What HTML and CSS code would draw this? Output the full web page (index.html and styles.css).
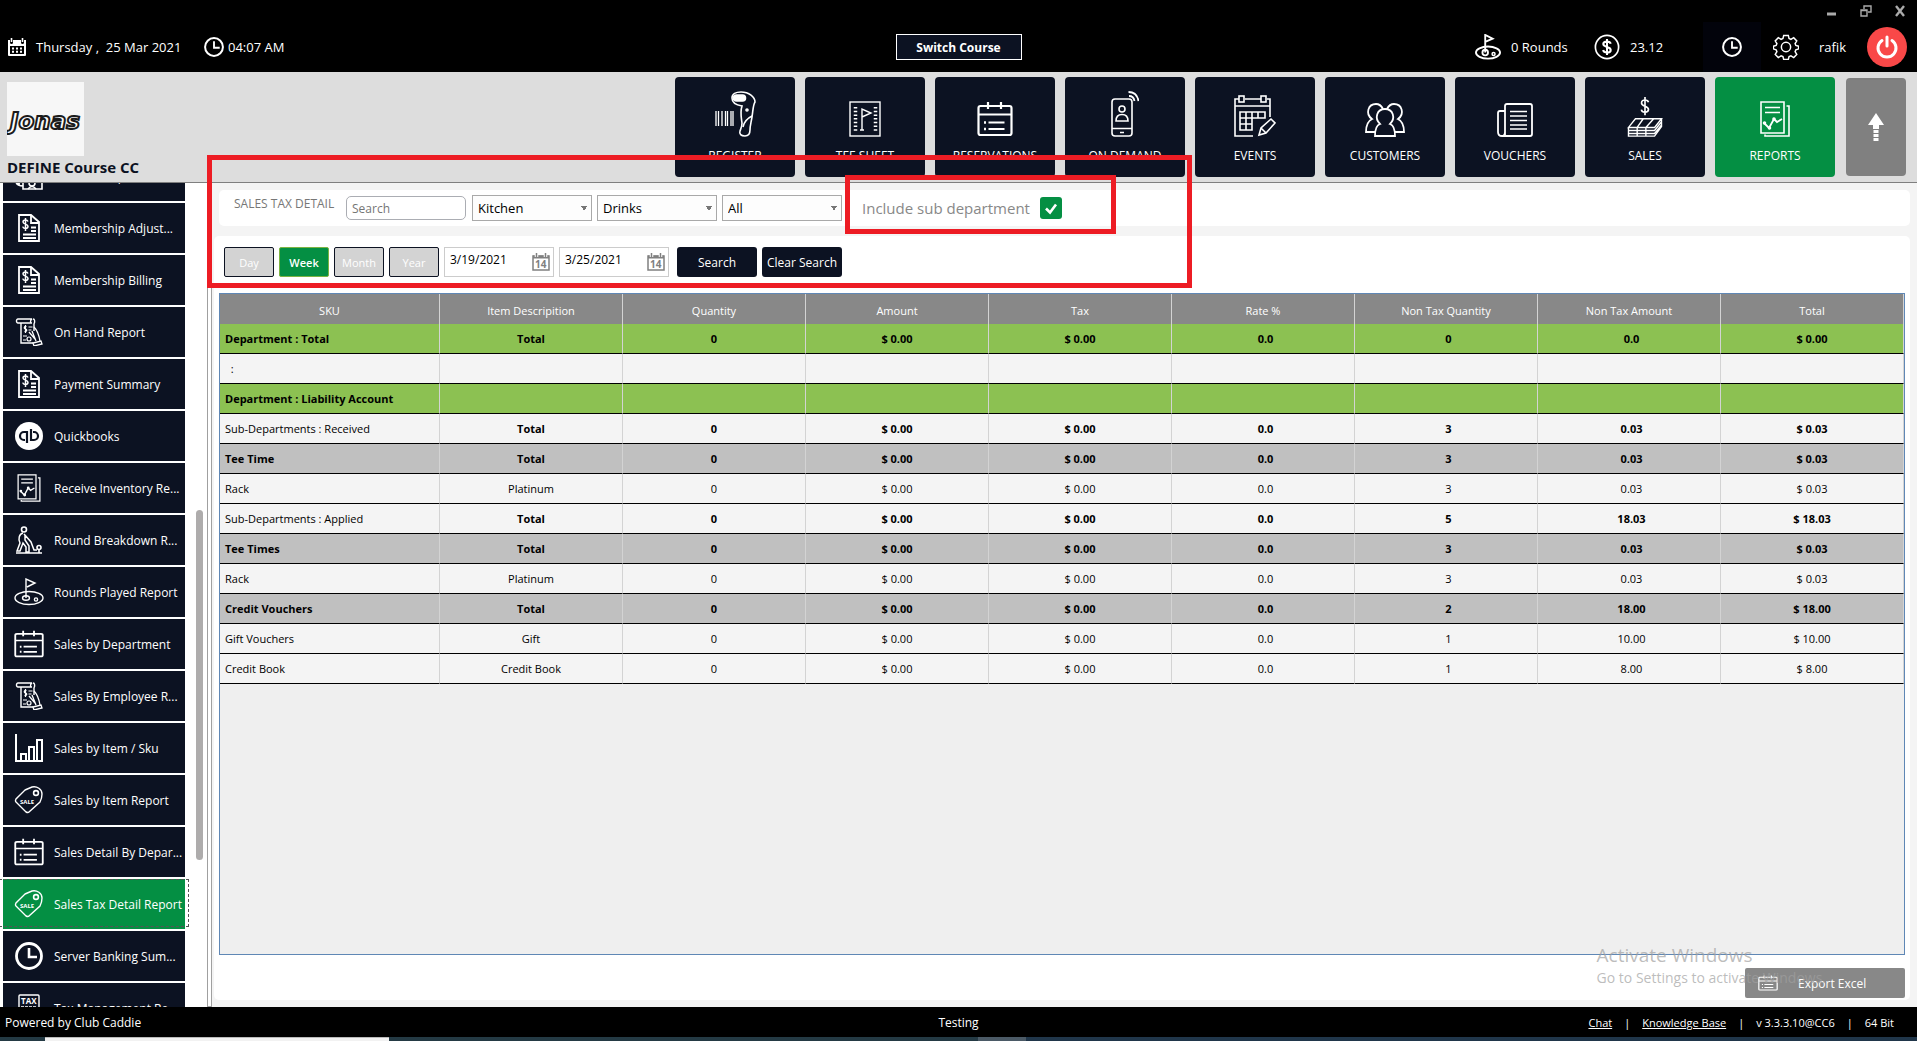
FILE: index.html
```html
<!DOCTYPE html>
<html lang="en">
<head>
  <meta charset="UTF-8">
  <title>Club Caddie - Sales Tax Detail</title>
  <link rel="stylesheet" href="styles.css">
</head>
<body>
  <!-- icons -->
  <svg class="sprite" aria-hidden="true">
    <symbol id="i-cal" viewBox="0 0 20 20">
      <path d="M1 3h2v2.500a1.500 1.500 0 0 0 3 0V3h8v2.500a1.500 1.500 0 0 0 3 0V3h2v15a1 1 0 0 1-1 1H2a1 1 0 0 1-1-1z" fill="currentColor" stroke="none"/>
      <path d="M4.500 1v4M15.500 1v4" stroke-width="1.600"/>
      <rect x="3" y="9" width="14" height="8" fill="#000" stroke="none"/>
      <path d="M5 11.500h2m2 0h2m2 0h2M5 14.800h2m2 0h2m2 0h2" stroke-width="2"/>
    </symbol>
    <symbol id="i-clock" viewBox="0 0 28 28">
      <circle cx="14" cy="14" r="12.500" stroke-width="2.800"/>
      <path d="M14 6v9h8" stroke-width="2.600"/>
    </symbol>
    <symbol id="i-golf" viewBox="0 0 28 28">
      <path d="M11 20V1l8 4-8 3.500" stroke-width="2"/>
      <ellipse cx="14" cy="20" rx="13" ry="6.500" stroke-width="2"/>
      <circle cx="11" cy="20" r="3" stroke-width="2"/>
      <circle cx="20" cy="21.500" r="1.600"/>
    </symbol>
    <symbol id="i-dollar" viewBox="0 0 28 28">
      <circle cx="14" cy="14" r="12.500" stroke-width="1.800"/>
      <path d="M18 10.500c-.5-2-2-2.500-4-2.500s-4 .8-4 2.900c0 4 8 2 8 6.200 0 2.100-2 2.900-4 2.900s-3.700-.7-4.200-2.700M14 5.500v17" stroke-width="2.200"/>
    </symbol>
    <symbol id="i-gear" viewBox="0 0 28 28">
      <path d="M11.500 1.500h5l.8 3.400 2 .9 3-1.900 3.300 3.500-1.800 3 .8 1.900 3 .8v3l-3 .9-.8 2 1.800 3-3.300 3.400-3-1.800-2 .8-.8 3h-5l-.8-3-2-.8-3 1.800-3.300-3.400 1.800-3-.8-2-3-.9v-3l3-.8.800-1.900-1.800-3 3.300-3.500 3 1.900 2-.9z"/>
      <circle cx="14" cy="14" r="5"/>
    </symbol>
    <symbol id="i-power" viewBox="0 0 24 24">
      <path d="M7 5.500a9 9 0 1 0 10 0M12 2v9" stroke-width="3" stroke-linecap="round"/>
    </symbol>
    <symbol id="i-scanner" viewBox="0 0 41 46">
      <path d="M1 20v15M3.500 20v15M7 20v15M10.500 20v15M12.500 20v15M16 20v15M18 20v15" stroke-width="1.300"/>
      <path d="M27 15c-6-1-10-3-10-8 0-4 4-6 9-6 8 0 14 5 14 10-2 3-2 9-3 15s-2 9-2 13c0 3-1 6-5 6s-6-2-5-5 2-4 2-8c-1-7-2-11 0-17z"/>
      <rect x="18.500" y="4" width="12" height="6" rx="3" fill="currentColor"/>
      <circle cx="32" cy="19" r="1"/>
      <path d="M37 25c-4 2-8 6-9 11"/>
    </symbol>
    <symbol id="i-tee" viewBox="0 0 32 36">
      <rect x="1" y="1" width="30" height="34" stroke-width="1.400"/>
      <path d="M6.500 6v25M26.500 6v25" stroke-width="3.500" stroke-dasharray="1.500 2.200"/>
      <path d="M13 29V8l9 4-9 4M11 29h4" stroke-width="1.400"/>
    </symbol>
    <symbol id="i-list" viewBox="0 0 36 36" preserveAspectRatio="none">
      <rect x="1.500" y="5" width="33" height="29" rx="2" stroke-width="2.200"/>
      <path d="M2 13.500h32M11 1v7M24 1v7M11.500 21.500h16M11.500 28h16" stroke-width="2.200"/>
      <path d="M7 21.500h2M7 28h2" stroke-width="2.400"/>
    </symbol>
    <symbol id="i-phone" viewBox="0 0 28 46">
      <rect x="1" y="8" width="20" height="37" rx="3"/>
      <path d="M1 37.500h20M9 41.500h4"/>
      <circle cx="11" cy="18" r="3"/>
      <path d="M5 30c0-4 2-6.500 6-6.500s6 2.500 6 6.500z"/>
      <path d="M18 5c3 0 5 2 5.500 5M17.500 1c5.500 0 9 3 10 9" stroke-width="1.800"/>
    </symbol>
    <symbol id="i-events" viewBox="0 0 42 42">
      <path d="M36 22V4h-3M27 4H11M5 4H1v37h18M1 11h35"/>
      <rect x="5" y="1" width="5" height="6"/>
      <rect x="27" y="1" width="5" height="6"/>
      <path d="M6 17h25v6H6zM6 23v12h12V17M12 17v18M6 29h12M24 17v6"/>
      <path d="M25 40l2-7 10-9 4 4-9 10zM27 33l5 5"/>
    </symbol>
    <symbol id="i-people" viewBox="0 0 40 34">
      <path d="M10 33c0-7 2-11 5-12-6-6-3-15 5-15s11 9 5 15c3 1 5 5 5 12z" stroke-width="1.800"/>
      <path d="M10 29H1c0-8 2-11 6-13-7-5-4-15 4-15 3 0 5 1 7 5M30 29h9c0-8-2-11-6-13 7-5 4-15-4-15-3 0-5 1-7 5" stroke-width="1.800"/>
    </symbol>
    <symbol id="i-news" viewBox="0 0 36 34">
      <path d="M8 33V3q0-2 2-2h23q2 0 2 2v28q0 2-2 2H5q-4 0-4-4V10q0-2 2-2h5M8 29q0 4-3 4" stroke-width="1.800"/>
      <path d="M13 8.500h17M13 13h17M13 17.500h17M13 22h17M13 26h17" stroke-width="1.600"/>
    </symbol>
    <symbol id="i-money" viewBox="0 0 40 46">
      <path d="M24 6c-.5-2-2-2.500-4-2.500s-4 .8-4 3.500c0 4.500 8 3 8 7.500 0 2-2 3-4 3s-3.800-.7-4.200-3M20 0v21" stroke-width="1.900"/>
      <path d="M9 25h30l-8 10H1zM18 25l-7 10M30 25l-9 10M1 35v10h30l8-11v-9M1 38.500h30l8-10M1 42h30l8-10M11 35v10M21 35v10"/>
    </symbol>
    <symbol id="i-report" viewBox="0 0 30 36">
      <path d="M1 1h23v31H1z"/>
      <path d="M26.500 5H29v30H5v-1.500M5 6.500h15M5 11.500h15" stroke-width="1.600"/>
      <path d="M4 22l5 5 5-9 3 3 5-3" stroke-width="1.800"/>
      <circle cx="4.500" cy="22" r="1"/><circle cx="9.500" cy="27" r="1"/><circle cx="14" cy="18" r="1"/>
    </symbol>
    <symbol id="i-up" viewBox="0 0 16 28">
      <path d="M8 0l8 12h-5v4H5v-4H0z" fill="currentColor" stroke="none"/>
      <path d="M8 17v11" stroke-width="5" stroke-dasharray="3 1"/>
    </symbol>
    <symbol id="i-invoice" viewBox="0 0 28 28">
      <path d="M4 1h12l8 7v19H4z" stroke-width="1.800"/>
      <path d="M16 1v8h8M16 13.500h5M16 17h5M8 20.500h13M8 24h13" stroke-width="1.800"/>
      <path d="M13 7.500c-.5-1.200-1.400-1.500-2.500-1.500S8 6.500 8 8c0 2.600 5 1.600 5 4.300C13 14 11.700 14.500 10.500 14.500S8 14 7.700 12.700M10.500 4v13" stroke-width="1.500"/>
    </symbol>
    <symbol id="i-hand" viewBox="0 0 28 28">
      <path d="M6 5v20h12M6 5H3c-2 0-2-4 0-4h14c-2 1-2 4 0 4H6M18 1c2 0 2 3 1 5v7" stroke-width="1.400"/>
      <path d="M11.500 8.500c-2.500-.5-3 2-1 2.500s1.500 3-1 2.500M10.500 7v8M13.500 9h4M13.500 12h3M8 18h4M8 22h3" stroke-width="1.200"/>
      <circle cx="14" cy="21" r="2" stroke-width="1.200"/>
      <path d="M14 14l6 7M19 9c3 3 5 8 6 14M17 13l4 10M18 25l8-2 1 3-8 2z" stroke-width="1.300"/>
    </symbol>
    <symbol id="i-qb" viewBox="0 0 28 28">
      <circle cx="14" cy="14" r="14" fill="currentColor" stroke="none"/>
      <g stroke="#0c1222" stroke-width="2.200"><path d="M12 21V10H9a4 4 0 0 0 0 8h1M16 7v11h3a4 4 0 0 0 0-8h-1"/></g>
    </symbol>
    <symbol id="i-golfer" viewBox="0 0 28 28">
      <circle cx="9" cy="3.500" r="2.500"/>
      <path d="M8 7c-4 1-5 6-3 10l-3 8h3l3-8 3 4v5h3v-6l-4-6V9M9 8l7 8 3 8h3M1 27h26" stroke-width="1.500"/>
      <circle cx="24" cy="21.500" r="2"/>
      <path d="M24 24v3"/>
    </symbol>
    <symbol id="i-hole" viewBox="0 0 30 28">
      <path d="M12 20V1l9 4-8 4" stroke-width="1.400"/>
      <ellipse cx="15" cy="20" rx="14" ry="6.500" stroke-width="1.400"/>
      <ellipse cx="12" cy="20" rx="3.500" ry="2.200" stroke-width="1.400"/>
      <circle cx="22" cy="21.500" r="1.600" stroke-width="1.400"/>
    </symbol>
    <symbol id="i-bars" viewBox="0 0 28 28">
      <path d="M1 0v27h27M6 27v-7h5v7M14 27V13h5v14M22 27V6h5v21" stroke-width="2"/>
    </symbol>
    <symbol id="i-sale" viewBox="0 0 28 28">
      <path d="M10 4l7-3c5-1 10 2 10 7 0 3-1 6-2 8L14 26q-1 1-3 0L1 16q-1-1 0-3z" stroke-width="1.400"/>
      <circle cx="21" cy="7" r="2.400"/>
      <text x="5" y="18" class="tag-text">SALE</text>
    </symbol>
    <symbol id="i-tax" viewBox="0 0 22 28">
      <rect x="1" y="1" width="20" height="26" rx="1" stroke-width="1.400"/>
      <text x="3" y="10" class="tax-text">TAX</text>
      <path d="M3 13h3m1 0h3m1 0h3m1 0h3M3 16h16"/>
    </symbol>
    <symbol id="i-people2" viewBox="0 0 28 28">
      <path d="M8 27h19V12H8zM8 24q-6 0-7-4M5 22q-5-1-4-4"/>
      <circle cx="17" cy="21" r="3"/>
      <path d="M13 27q4-5 8 0"/>
    </symbol>
    <symbol id="i-date14" viewBox="0 0 18 18">
      <path d="M1 3h16v14H1z" stroke-width="1.500"/>
      <path d="M1 4h16" stroke-width="3"/>
      <path d="M4.500 0v4M13.500 0v4" stroke="#fff" stroke-width="3.500"/>
      <path d="M4.500 0v4M13.500 0v4" stroke-width="1.500"/>
      <text x="3" y="15" class="day-text">14</text>
    </symbol>
    <symbol id="i-check" viewBox="0 0 22 22">
      <path d="M6 11.500l4 4 6-8" stroke-width="2.600"/>
    </symbol>
  </svg>

  <header class="topbar">
    <div class="window-buttons">
      <button aria-label="Minimize"><svg viewBox="0 0 12 12"><path d="M1 9h9" stroke-width="3"/></svg></button>
      <button aria-label="Restore"><svg viewBox="0 0 12 12"><path d="M1 5h6v6H1zM1 5.500h6M4 4V1h7v6H8" stroke-width="1.400"/></svg></button>
      <button aria-label="Close"><svg viewBox="0 0 12 12"><path d="M2 1l8 10M10 1L2 11" stroke-width="2.400"/></svg></button>
    </div>
    <div class="status">
      <div class="status-left">
        <svg class="ic20"><use href="#i-cal"/></svg>
        <span class="today">Thursday ,&nbsp; 25 Mar 2021</span>
        <svg class="ic20"><use href="#i-clock"/></svg>
        <span class="time">04:07 AM</span>
      </div>
      <button class="switch-course">Switch Course</button>
      <div class="status-right">
        <svg class="ic26"><use href="#i-golf"/></svg>
        <span class="rounds">0 Rounds</span>
        <svg class="ic26"><use href="#i-dollar"/></svg>
        <span class="balance">23.12</span>
        <button class="clock-btn" aria-label="Clock in"><svg class="ic20"><use href="#i-clock"/></svg></button>
        <button class="gear-btn" aria-label="Settings"><svg class="ic26"><use href="#i-gear"/></svg></button>
        <span class="user">rafik</span>
        <button class="power-btn" aria-label="Log out"><svg class="ic24"><use href="#i-power"/></svg></button>
      </div>
    </div>
  </header>

  <div class="header">
    <div class="club">
      <svg class="logo" viewBox="0 0 77 74" role="img" aria-label="Jonas">
        <text x="3" y="47" class="logo-text">Jonas</text>
      </svg>
      <h1>DEFINE Course CC</h1>
    </div>
    <nav class="tiles">
      <button class="tile"><svg width="41" height="46"><use href="#i-scanner"/></svg>REGISTER</button>
      <button class="tile"><svg width="32" height="36"><use href="#i-tee"/></svg>TEE SHEET</button>
      <button class="tile"><svg width="36" height="36"><use href="#i-list"/></svg>RESERVATIONS</button>
      <button class="tile"><svg width="28" height="46"><use href="#i-phone"/></svg>ON DEMAND</button>
      <button class="tile"><svg width="42" height="42"><use href="#i-events"/></svg>EVENTS</button>
      <button class="tile"><svg width="40" height="34"><use href="#i-people"/></svg>CUSTOMERS</button>
      <button class="tile"><svg width="36" height="34"><use href="#i-news"/></svg>VOUCHERS</button>
      <button class="tile"><svg width="40" height="40"><use href="#i-money"/></svg>SALES</button>
      <button class="tile active"><svg width="30" height="36"><use href="#i-report"/></svg>REPORTS</button>
      <button class="tile-up" aria-label="Collapse"><svg width="16" height="28"><use href="#i-up"/></svg></button>
    </nav>
  </div>

  <div class="content">
    <aside class="sidebar">
      <nav class="menu">
        <a href="#"><svg><use href="#i-people2"/></svg>Membership</a>
        <a href="#"><svg><use href="#i-invoice"/></svg>Membership Adjust...</a>
        <a href="#"><svg><use href="#i-invoice"/></svg>Membership Billing</a>
        <a href="#"><svg><use href="#i-hand"/></svg>On Hand Report</a>
        <a href="#"><svg><use href="#i-invoice"/></svg>Payment Summary</a>
        <a href="#"><svg><use href="#i-qb"/></svg>Quickbooks</a>
        <a href="#"><svg><use href="#i-report"/></svg>Receive Inventory Re...</a>
        <a href="#"><svg><use href="#i-golfer"/></svg>Round Breakdown R...</a>
        <a href="#"><svg><use href="#i-hole"/></svg>Rounds Played Report</a>
        <a href="#"><svg><use href="#i-list"/></svg>Sales by Department</a>
        <a href="#"><svg><use href="#i-hand"/></svg>Sales By Employee R...</a>
        <a href="#"><svg><use href="#i-bars"/></svg>Sales by Item / Sku</a>
        <a href="#"><svg><use href="#i-sale"/></svg>Sales by Item Report</a>
        <a href="#"><svg><use href="#i-list"/></svg>Sales Detail By Depar...</a>
        <a href="#" class="active"><svg><use href="#i-sale"/></svg>Sales Tax Detail Report</a>
        <a href="#"><svg><use href="#i-clock"/></svg>Server Banking Sum...</a>
        <a href="#"><svg><use href="#i-tax"/></svg>Tax Management Re...</a>
      </nav>
      <div class="scroll-track"><div class="scroll-thumb"></div></div>
    </aside>
    <div class="splitter"></div>

    <main class="main">
      <div class="filters">
        <h2>SALES TAX DETAIL</h2>
        <input type="text" class="search-box" placeholder="Search" aria-label="Search">
        <select aria-label="Department"><option>Kitchen</option></select>
        <select aria-label="Sub department"><option>Drinks</option></select>
        <select aria-label="Type"><option>All</option></select>
        <label class="include" for="includeSub">Include sub department</label>
        <span class="check">
          <input type="checkbox" id="includeSub" checked>
          <svg><use href="#i-check"/></svg>
        </span>
      </div>

      <section class="report">
        <div class="range">
          <button class="period">Day</button>
          <button class="period active">Week</button>
          <button class="period">Month</button>
          <button class="period">Year</button>
          <div class="date"><input type="text" value="3/19/2021" aria-label="From date"><svg><use href="#i-date14"/></svg></div>
          <div class="date"><input type="text" value="3/25/2021" aria-label="To date"><svg><use href="#i-date14"/></svg></div>
          <button class="dark-btn first">Search</button>
          <button class="dark-btn">Clear Search</button>
        </div>

        <div class="grid-box">
          <table>
            <thead>
              <tr><th class="sku">SKU</th><th>Item Descripition</th><th>Quantity</th><th>Amount</th><th>Tax</th><th>Rate %</th><th>Non Tax Quantity</th><th>Non Tax Amount</th><th>Total</th></tr>
            </thead>
            <tbody>
              <tr class="dept"><td>Department : Total</td><td>Total</td><td>0</td><td>$ 0.00</td><td>$ 0.00</td><td>0.0</td><td>0</td><td>0.0</td><td>$ 0.00</td></tr>
              <tr><td>&nbsp; :</td><td></td><td></td><td></td><td></td><td></td><td></td><td></td><td></td></tr>
              <tr class="dept"><td>Department : Liability Account</td><td></td><td></td><td></td><td></td><td></td><td></td><td></td><td></td></tr>
              <tr class="sub"><td>Sub-Departments : Received</td><td>Total</td><td>0</td><td>$ 0.00</td><td>$ 0.00</td><td>0.0</td><td>3</td><td>0.03</td><td>$ 0.03</td></tr>
              <tr class="group"><td>Tee Time</td><td>Total</td><td>0</td><td>$ 0.00</td><td>$ 0.00</td><td>0.0</td><td>3</td><td>0.03</td><td>$ 0.03</td></tr>
              <tr><td>Rack</td><td>Platinum</td><td>0</td><td>$ 0.00</td><td>$ 0.00</td><td>0.0</td><td>3</td><td>0.03</td><td>$ 0.03</td></tr>
              <tr class="sub"><td>Sub-Departments : Applied</td><td>Total</td><td>0</td><td>$ 0.00</td><td>$ 0.00</td><td>0.0</td><td>5</td><td>18.03</td><td>$ 18.03</td></tr>
              <tr class="group"><td>Tee Times</td><td>Total</td><td>0</td><td>$ 0.00</td><td>$ 0.00</td><td>0.0</td><td>3</td><td>0.03</td><td>$ 0.03</td></tr>
              <tr><td>Rack</td><td>Platinum</td><td>0</td><td>$ 0.00</td><td>$ 0.00</td><td>0.0</td><td>3</td><td>0.03</td><td>$ 0.03</td></tr>
              <tr class="group"><td>Credit Vouchers</td><td>Total</td><td>0</td><td>$ 0.00</td><td>$ 0.00</td><td>0.0</td><td>2</td><td>18.00</td><td>$ 18.00</td></tr>
              <tr><td>Gift Vouchers</td><td>Gift</td><td>0</td><td>$ 0.00</td><td>$ 0.00</td><td>0.0</td><td>1</td><td>10.00</td><td>$ 10.00</td></tr>
              <tr><td>Credit Book</td><td>Credit Book</td><td>0</td><td>$ 0.00</td><td>$ 0.00</td><td>0.0</td><td>1</td><td>8.00</td><td>$ 8.00</td></tr>
            </tbody>
          </table>
        </div>

        <button class="export"><svg><use href="#i-list"/></svg><span>Export Excel</span></button>
      </section>
    </main>
  </div>

  <footer class="footer">
    <span>Powered by Club Caddie</span>
    <span>Testing</span>
    <div class="links">
      <a href="#">Chat</a><span>|</span><a href="#">Knowledge Base</a><span>|</span><span>v 3.3.3.10@CC6</span><span>|</span><span>64 Bit</span>
    </div>
  </footer>
  <div class="taskbar"><i></i><i class="open-app"></i><i class="spacer"></i><i class="task"></i></div>

  <div class="watermark">
    <p class="big">Activate Windows</p>
    <p>Go to Settings to activate Windows.</p>
  </div>
  <div class="mark mark-filters"></div>
  <div class="mark mark-check"></div>
</body>
</html>
```
FILE: styles.css
```css
* {
  box-sizing: border-box;
}

body {
  margin: 0;
  height: 100vh;
  display: flex;
  flex-direction: column;
  overflow: hidden;
  position: relative;
  font-family: "Open Sans", "Noto Sans", sans-serif;
  font-size: 12px;
  background: #fff;
}

svg {
  fill: none;
  stroke: currentColor;
  stroke-width: 1.6;
  flex: none;
}

svg text {
  fill: currentColor;
  stroke: none;
}

.sprite {
  display: none;
}

button, input, select {
  font-family: inherit;
  font-size: 12px;
}

button {
  border: none;
  padding: 0;
  background: none;
  color: #fff;
  cursor: pointer;
}

h1, h2, p {
  margin: 0;
}

.ic20 { width: 20px; height: 20px; }
.ic24 { width: 24px; height: 24px; }
.ic26 { width: 26px; height: 26px; }

/* top bar */
.topbar {
  background: #000;
  color: #fff;
}

.window-buttons {
  height: 22px;
  display: flex;
  justify-content: flex-end;
  align-items: center;
  gap: 22px;
  padding-right: 11px;
}

.window-buttons button {
  display: flex;
  color: #aaa;
}

.window-buttons svg {
  width: 12px;
  height: 12px;
}

.status {
  height: 50px;
  display: grid;
  grid-template-columns: 1fr auto 1fr;
  align-items: center;
  font-size: 13px;
}

.status-left, .status-right {
  display: flex;
  align-items: center;
}

.status-left {
  padding-left: 7px;
}

.today {
  width: 168px;
  margin-left: 9px;
}

.time {
  margin-left: 4px;
}

.switch-course {
  width: 126px;
  height: 26px;
  border: 1px solid #fff;
  background: #0c1222;
  font-weight: 700;
}

.status-right {
  justify-content: flex-end;
  padding-right: 10px;
}

.rounds {
  width: 83px;
  margin-left: 10px;
}

.balance {
  width: 73px;
  margin-left: 10px;
}

.clock-btn {
  width: 58px;
  height: 50px;
  display: flex;
  align-items: center;
  justify-content: center;
  background: #02030b;
}

.gear-btn {
  display: flex;
  margin: 0 20px 0 12px;
}

.user {
  width: 48px;
}

.power-btn {
  width: 40px;
  height: 40px;
  border-radius: 50%;
  display: flex;
  align-items: center;
  justify-content: center;
  background: #f94848;
}

/* header with the main tiles */
.header {
  display: flex;
  justify-content: space-between;
  height: 111px;
  padding: 5px 11px 0 7px;
  background: #ddd;
  border-bottom: 1px solid #7f7f7f;
}

.club {
  padding-top: 5px;
}

.logo {
  display: block;
  width: 77px;
  height: 74px;
  background: #f7f7f7;
}

.logo .logo-text {
  font: italic 700 23px "DejaVu Sans", sans-serif;
  fill: #fff;
  stroke: #1c1c1c;
  stroke-width: 2;
}

.club h1 {
  font-size: 15px;
  line-height: 22px;
  font-weight: 700;
  color: #0c1222;
}

.tiles {
  display: flex;
  gap: 10px;
}

.tile {
  width: 120px;
  height: 100px;
  display: flex;
  flex-direction: column;
  align-items: center;
  justify-content: flex-end;
  gap: 10px;
  padding-bottom: 12px;
  line-height: 18px;
  border-radius: 4px;
  background: #0c1222;
}

.tile.active {
  background: #048f43;
}

.tile-up {
  width: 60px;
  height: 98px;
  margin: 1px 0 0 1px;
  display: flex;
  align-items: center;
  justify-content: center;
  border-radius: 4px;
  background: #808080;
}

/* body of the page */
.content {
  flex: 1;
  min-height: 0;
  display: flex;
}

.sidebar {
  width: 207px;
  display: flex;
  overflow: hidden;
  padding-left: 3px;
}

.menu {
  width: 182px;
  margin-top: -32px;
}

.menu a {
  position: relative;
  height: 50px;
  margin-bottom: 2px;
  display: flex;
  align-items: center;
  gap: 10px;
  padding-left: 11px;
  color: #fff;
  background: #0c1222;
  text-decoration: none;
  white-space: nowrap;
}

.menu svg {
  width: 30px;
  height: 28px;
}

.menu a.active {
  background: #048f43;
}

/* focus rectangle of the selected report */
.menu a.active::after {
  content: "";
  position: absolute;
  inset: 0 -4px 2px -4px;
  border: 1px dashed #555;
}

.scroll-track {
  width: 7px;
  height: 100%;
  margin-left: 11px;
  padding-top: 327px;
}

.scroll-thumb {
  height: 350px;
  border-radius: 4px;
  background: #aeacac;
}

.splitter {
  width: 5px;
  border: 1px solid #a0a0a0;
  border-top: none;
}

.main {
  flex: 1;
  min-width: 0;
  display: flex;
  flex-direction: column;
  gap: 10px;
  padding: 7px 7px 7px 2px;
  background: #f4f4f4;
}

.filters {
  height: 36px;
  margin-left: 5px;
  display: flex;
  align-items: center;
  gap: 5px;
  padding-left: 15px;
  border-radius: 5px;
  background: #fff;
}

.filters h2 {
  width: 107px;
  padding-bottom: 10px;
  font-size: 12px;
  font-weight: 400;
  color: #777;
}

.search-box {
  width: 120px;
  height: 24px;
  margin-right: 1px;
  padding: 0 5px;
  border: 1px solid #abadb3;
  border-radius: 5px;
}

.search-box::placeholder {
  color: #757575;
}

select {
  appearance: none;
  width: 120px;
  height: 26px;
  padding: 0 5px;
  border: 1px solid #a9a9a9;
  border-radius: 0;
  font-size: 13px;
  color: #000;
  background: #fdfdfd;
  background-image: linear-gradient(to top right, transparent 50%, #777 50%), linear-gradient(to bottom right, #777 50%, transparent 50%);
  background-position: right 7px center, right 4px center;
  background-size: 3px 5px;
  background-repeat: no-repeat;
}

.include {
  margin-left: 15px;
  margin-right: 5px;
  font-size: 15px;
  color: #888;
}

.check {
  display: grid;
}

.check input, .check svg {
  grid-area: 1 / 1;
  width: 22px;
  height: 22px;
  margin: 0;
}

.check input {
  appearance: none;
  border-radius: 3px;
  background: #048f43;
}

.check svg {
  color: #fff;
  pointer-events: none;
}

.report {
  flex: 1;
  min-height: 0;
  display: flex;
  flex-direction: column;
  padding: 11px 5px 2px;
  border-radius: 5px;
  background: #fff;
}

.range {
  display: flex;
  gap: 5px;
  padding-left: 5px;
  margin-bottom: 16px;
}

.period {
  width: 50px;
  height: 30px;
  border: 1px solid #0c1222;
  border-radius: 2px;
  background: #d3d3d3;
  font-size: 11px;
}

.period.active {
  border-color: #7cb342;
  background: #048f43;
  font-weight: 600;
}

.date {
  width: 110px;
  height: 30px;
  display: flex;
  align-items: center;
  padding-right: 3px;
  border: 1px solid #ccc;
}

.date input {
  flex: 1;
  min-width: 0;
  height: 24px;
  margin-bottom: 6px;
  padding: 0 5px;
  border: none;
  background: none;
}

.date svg {
  width: 18px;
  height: 18px;
  color: #808080;
}

.dark-btn {
  width: 80px;
  height: 30px;
  border-radius: 3px;
  background: #0c1222;
}

.dark-btn.first {
  margin-left: 3px;
}

/* report table */
.grid-box {
  flex: 1;
  min-height: 0;
  border: 1px solid #5f87b5;
  background: #efefef;
}

table {
  width: 100%;
  table-layout: fixed;
  border-collapse: separate;
  border-spacing: 0;
  font-size: 11px;
}

th, td {
  height: 30px;
  padding: 0 5px;
  border-right: 1px solid #d3d3d3;
  text-align: center;
  white-space: pre;
}

th {
  padding-top: 2px;
  font-weight: 400;
  color: #fff;
  background: #888;
}

th.sku {
  width: 220px;
}

td {
  border-bottom: 1px solid #000;
  background: #f4f4f4;
}

td:first-child {
  text-align: left;
}

/* rate and non tax columns sit a bit to the right */
td:nth-child(6), td:nth-child(7), td:nth-child(8) {
  padding-left: 10px;
}

.dept td, .group td, .sub td {
  font-weight: 700;
}

.sub td:first-child {
  font-weight: 400;
}

.dept td {
  background: #8cc152;
}

.group td {
  background: #c0c0c0;
}

.export {
  align-self: flex-end;
  width: 160px;
  height: 30px;
  margin-top: 13px;
  display: flex;
  align-items: center;
  gap: 20px;
  padding-left: 13px;
  border-radius: 2px;
  background: #888;
}

.export svg {
  width: 20px;
  height: 16px;
}

/* footer */
.footer {
  height: 30px;
  display: grid;
  grid-template-columns: 1fr auto 1fr;
  align-items: center;
  padding: 0 5px;
  color: #fff;
  background: #000;
}

.links {
  display: flex;
  justify-content: flex-end;
  gap: 12px;
  padding-right: 18px;
  font-size: 11px;
}

.links a {
  color: #fff;
}

.taskbar {
  height: 4px;
  display: flex;
  background: #20364a;
}

.taskbar i {
  width: 45px;
  background: #243a44;
}

.taskbar .open-app {
  width: 344px;
  border-top: 1px solid #bbb;
  background: #f2f2f2;
}

.taskbar .spacer {
  width: 589px;
}

.taskbar .task {
  width: 48px;
  background: #4b5a66;
}

/* things that lie over the page */
.watermark {
  position: absolute;
  right: 91px;
  bottom: 53px;
  color: rgba(160, 160, 160, 0.7);
  font-size: 14px;
  line-height: 20px;
  pointer-events: none;
}

.watermark .big {
  font-size: 19px;
  line-height: 25px;
}

.mark {
  position: absolute;
  border: 5px solid #ed1c24;
  pointer-events: none;
}

.mark-filters {
  left: 207px;
  top: 155px;
  width: 985px;
  height: 133px;
}

.mark-check {
  left: 845px;
  top: 175px;
  width: 271px;
  height: 59px;
}

.tag-text {
  font-size: 6px;
  font-weight: 700;
}

.tax-text {
  font-size: 8px;
  font-weight: 700;
}

.day-text {
  font-size: 10px;
  font-weight: 700;
}
```
